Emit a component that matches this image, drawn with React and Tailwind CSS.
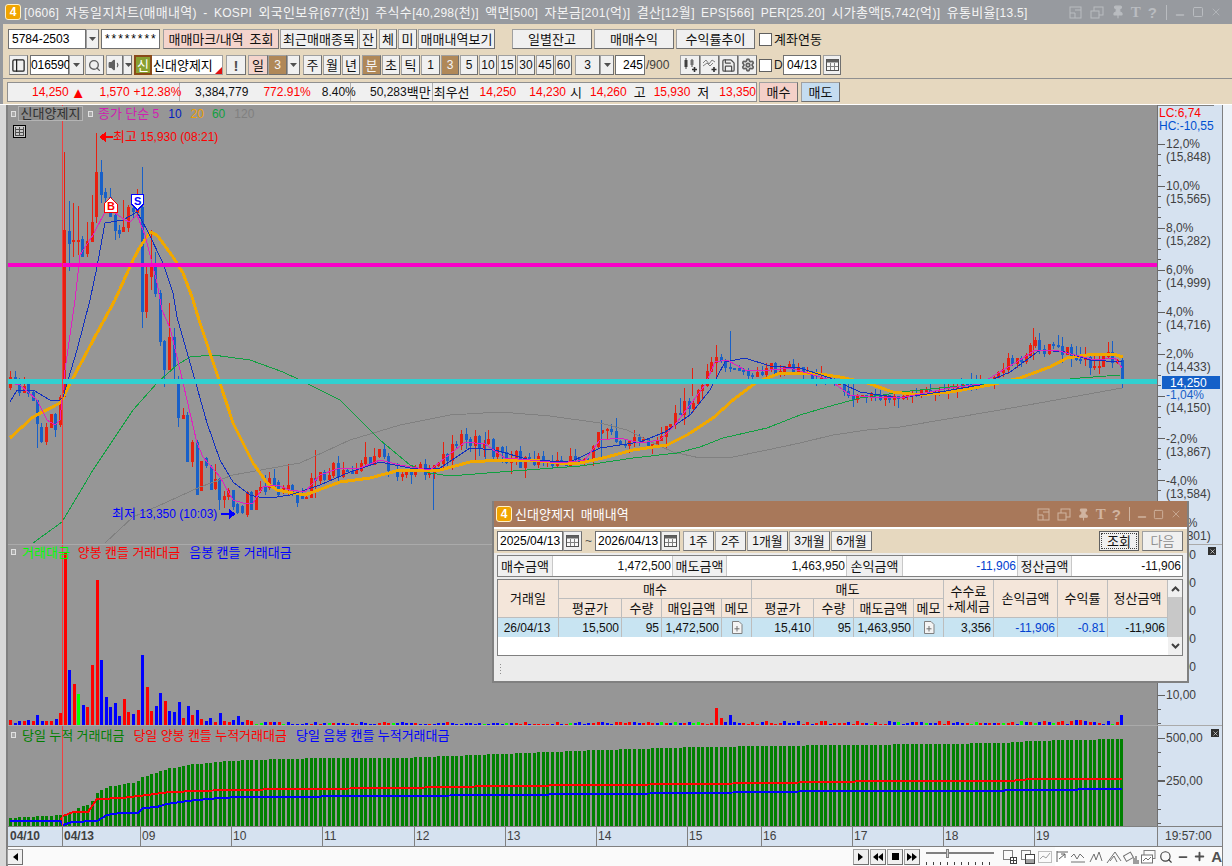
import React from "react";
import { PanelLeft, Search, Volume1, Save, Settings, Pin, Minus, Square, X, Plus } from "lucide-react";

const T = ({ s }) =>
  s.split(/([가-힣]+)/).map((p, i) =>
    /[가-힣]/.test(p) ? <span key={i} className="text-[13px]">{p}</span> : <span key={i}>{p}</span>
  );
const ST = ({ s }) =>
  s.split(/([가-힣]+)/).map((p, i) =>
    /[가-힣]/.test(p) ? <tspan key={i} fontSize="13">{p}</tspan> : <tspan key={i}>{p}</tspan>
  );

const btnBase = "flex items-center justify-center shrink-0 bg-[#f0f0f0] border border-[#a0a0a0] border-r-[#707070] border-b-[#707070] text-[#101010]";
const Btn = ({ w = "", t, c = "" }) => <div className={`${btnBase} ${w} ${c}`}>{t !== undefined && <T s={t} />}</div>;
const Arrow = ({ c = "" }) => (
  <div className={`${btnBase} ${c}`}>
    <svg width="9" height="6"><polygon points="1,1 8,1 4.5,5" fill="#505050" /></svg>
  </div>
);
const Input = ({ w, t, c = "" }) => (
  <div className={`flex items-center shrink-0 bg-white border border-[#707070] text-black ${w} ${c}`}><T s={t} /></div>
);
const Cal = () => (
  <svg width="13" height="12" viewBox="0 0 13 12">
    <rect x="0.5" y="0.5" width="12" height="11" fill="#f8f8f8" stroke="#505050" />
    <rect x="0.5" y="0.5" width="12" height="3" fill="#606060" />
    <path d="M4.5 4V11M8.5 4V11M1 7.5H12" stroke="#808080" />
  </svg>
);
const Logo = () => (
  <div className="flex items-center justify-center w-[16px] h-[16px] rounded-[3px] bg-[#f0a400] border border-[#fff0c8] text-white font-bold text-[12px] shrink-0">4</div>
);
const Memo = () => (
  <svg width="12" height="13" viewBox="0 0 12 13">
    <path d="M1.5 0.5H8L11 3.5V12.5H1.5Z" fill="#f4f4f4" stroke="#808080" />
    <path d="M6 5V10.5M3.5 7.8H8.5" stroke="#707070" />
  </svg>
);

const lerp = (pts, x) => {
  if (x <= pts[0][0]) return pts[0][1];
  for (let i = 1; i < pts.length; i++) {
    if (x <= pts[i][0]) {
      const [a, b] = pts[i - 1];
      const [c, d] = pts[i];
      return b + ((d - b) * (x - a)) / (c - a);
    }
  }
  return pts[pts.length - 1][1];
};
const line = (p) => p.map((q) => q.join(",")).join(" ");
let seed = 7;
const rnd = () => {
  seed = (seed * 16807) % 2147483647;
  return (seed & 0xffff) / 65535;
};
const CR = "#e8200f";
const CB = "#1860c8";
const base = [
  [10.5,377,388,371,390,"r"],[15,377,383,371,384,"b"],[19,383,393,378,396,"b"],[24,386,393,377,393,"r"],[28,383,394,380,397,"b"],[33,392,401,390,401,"b"],[37.5,400,424,400,448,"b"],[41.5,427,442,423,443,"b"],[46,427,442,423,445,"r"],[51.5,414,428,414,428,"r"],[55.5,414,430,413,437,"b"],[60.5,397,425,395,427,"r"],
  [64,230,397,152,397,"r"],[69.5,231,244,201,271,"b"],[73.5,240,242,203,257,"r"],[78.5,240,242,206,255,"r"],[82.5,239,257,236,257,"b"],[87.5,241,254,222,257,"r"],[92.5,222,242,195,242,"r"],[96.5,172,217,133,223,"r"],[101.5,172,195,160,203,"b"],[105.5,192,198,188,207,"b"],[110,197,217,188,217,"b"],[115,215,231,213,240,"b"],[119.5,230,234,225,238,"b"],[123.5,227,232,200,232,"r"],[128.5,207,228,205,232,"r"],[133,208,212,200,218,"b"],[137.5,210,213,189,215,"r"],[142,207,312,167,328,"b"],[146.5,274,312,263,318,"r"],[151,267,277,230,290,"r"],[155.5,267,294,252,297,"b"],[160,293,342,290,346,"b"],[164,341,370,340,387,"b"],[169.5,337,370,303,370,"r"],[174,337,367,328,380,"b"],[178.5,382,418,376,427,"b"],[183,415,419,408,419,"r"],[187.5,415,462,412,462,"b"],[192.5,442,462,440,467,"r"],[197,442,495,440,495,"b"],[201.5,461,491,461,491,"r"],[206,458,466,457,468,"b"],[211,467,490,465,490,"b"],[215.5,479,489,464,490,"r"],[219.5,479,500,478,510,"b"],[224,496,500,491,508,"r"],[228.5,490,497,488,500,"r"],[233,490,507,490,510,"b"],[237.5,504,513,503,514,"b"],[242,506,513,505,514,"b"],[247,492,515,491,517,"r"],[251,492,510,491,510,"b"],[256,490,510,490,510,"r"],[260.5,487,491,481,493,"r"],[265,487,492,475,495,"b"],[269.5,478,488,472,490,"r"],[274,478,489,469,490,"b"],[278.5,482,495,480,496,"b"],[283,487,493,485,494,"r"],[288,485,490,464,495,"r"],[292.5,485,495,484,496,"b"],[297,494,503,492,507,"b"],
];
const key = [[300,495],[315,480],[330,470],[345,472],[360,465],[380,455],[395,470],[415,465],[433,470],[450,450],[465,440],[485,440],[500,455],[520,460],[540,458],[565,462],[585,460],[600,432],[620,440],[640,442],[660,438],[680,412],[695,398],[703,388],[712,362],[720,356],[730,368],[745,372],[765,370],[785,368],[800,372],[820,378],[835,385],[850,398],[870,396],[900,398],[920,392],[945,390],[970,384],[990,380],[1005,365],[1020,358],[1033,345],[1050,350],[1070,352],[1090,362],[1110,357],[1118,360]];
const gen = [];
let prev = 495;
for (let i = 64; i < 244; i++) {
  const x = 10.5 + i * 4.555;
  const amp = x < 660 ? 17 : x < 840 ? 13 : x < 990 ? 5 : 12;
  const cl = lerp(key, x) + (rnd() - 0.5) * amp;
  const top = Math.min(prev, cl), bot = Math.max(prev, cl) + 1;
  const up = rnd() * rnd() * 16, dn = rnd() * rnd() * 12;
  gen.push([x, top, Math.max(bot, top + 2), top - up, bot + dn, cl < prev ? "r" : "b"]);
  prev = cl;
}
gen.push([1122.5,360,379,358,388,"b"]);
const extra = [[315,450,498,"r"],[433,470,510,"b"],[452,435,470,"r"],[601,420,460,"b"],[730,331,372,"b"],[716,345,378,"r"],[1033,328,360,"r"],[961,378,392,"b"],[475,430,462,"r"],[485,432,460,"b"],[692,368,396,"r"]];
const candles = [...base, ...gen];

const m5 = [[10,383],[20,385],[37,400],[47,420],[55,425],[60,420],[65,370],[75,300],[80,255],[93,235],[105,212],[115,213],[125,220],[130,222],[137,215],[145,235],[157,283],[162,310],[170,328],[177,357],[187,400],[197,443],[203,457],[220,477],[233,500],[243,503],[253,503],[263,487],[277,485],[290,490],[305,492],[320,475],[340,468],[360,468],[380,460],[400,465],[430,470],[445,458],[465,442],[485,444],[505,458],[530,460],[560,463],[585,460],[600,440],[620,438],[640,443],[660,440],[675,425],[690,405],[705,385],[715,362],[727,360],[745,370],[770,370],[790,368],[810,374],[830,380],[850,395],[870,397],[900,398],[925,393],[950,388],[980,384],[1000,372],[1020,360],[1035,350],[1055,350],[1075,355],[1095,360],[1115,358],[1122,368]];
const m10 = [[10,402],[17,390],[33,390],[50,400],[60,400],[63,397],[77,350],[90,300],[97,267],[105,223],[123,220],[137,212],[147,230],[163,263],[173,293],[177,317],[193,373],[207,423],[220,460],[233,482],[250,495],[263,498],[277,497],[290,495],[320,485],[350,472],[380,462],[410,468],[440,468],[470,448],[495,450],[530,460],[570,462],[600,448],[640,442],[665,432],[690,415],[710,390],[725,362],[745,358],[770,366],[800,368],[830,378],[860,392],[900,398],[940,392],[980,385],[1010,372],[1040,350],[1065,352],[1090,360],[1122,362]];
const m20 = [[10,438],[33,417],[60,403],[72,380],[97,333],[115,300],[133,260],[140,247],[150,232],[157,235],[173,257],[183,273],[192,297],[200,323],[220,383],[233,423],[253,463],[267,483],[277,490],[293,493],[305,495],[340,482],[370,478],[400,470],[440,470],[470,462],[500,460],[530,460],[560,463],[580,463],[607,457],[633,450],[667,445],[687,435],[713,418],[733,400],[757,382],[780,373],[813,373],[840,377],[867,383],[893,392],[920,395],[950,392],[990,385],[1020,378],[1050,367],[1067,358],[1087,355],[1113,354],[1123,357]];
const m60 = [[33,543],[62,522],[93,470],[133,410],[157,383],[177,365],[190,357],[213,355],[250,360],[283,372],[300,380],[340,400],[380,440],[410,465],[430,473],[450,476],[500,472],[580,466],[633,458],[677,453],[700,447],[723,438],[767,428],[800,415],[827,407],[860,398],[883,395],[900,392],[950,387],[1000,383],[1028,383],[1060,380],[1080,378],[1120,375]];
const m120 = [[105,543],[133,517],[167,502],[200,487],[233,475],[300,463],[350,440],[400,425],[450,415],[500,412],[550,416],[600,423],[627,430],[647,440],[673,452],[700,458],[733,457],[767,450],[800,443],[833,435],[867,430],[900,427],[1000,410],[1067,398],[1122,388]];

const vol = [[5,"r"],[2,"b"],[4,"b"],[4,"r"],[5,"b"],[4,"r"],[10,"b"],[4,"b"],[4,"r"],[4,"r"],[6,"b"],[12,"r"],[173,"r"],[55,"b"],[41,"r"],[31,"g"],[20,"b"],[18,"r"],[60,"r"],[145,"r"],[65,"b"],[28,"b"],[18,"b"],[22,"b"],[9,"b"],[26,"r"],[13,"r"],[11,"b"],[15,"r"],[70,"b"],[38,"r"],[14,"r"],[19,"b"],[32,"b"],[24,"r"],[14,"b"],[13,"b"],[23,"b"],[7,"r"],[19,"b"],[10,"r"],[15,"b"],[6,"r"],[4,"b"],[7,"b"],[3,"r"],[12,"b"],[4,"r"],[3,"r"],[5,"b"],[9,"b"],[3,"b"],[5,"r"],[4,"r"]];
const volC = { r: "#ff0000", b: "#0000ff", g: "#00ff00" };
const volAll = [];
for (let i = 0; i < 245; i++) {
  const x = 10.5 + i * 4.555;
  if (i < vol.length) { volAll.push([x, vol[i][0], vol[i][1]]); continue; }
  let h = 1 + Math.floor(rnd() * 2.6);
  if (x > 640) h += Math.floor(rnd() * 2);
  if (Math.abs(x - 716) < 2.5) h = 17;
  if (Math.abs(x - 721) < 2.5) h = 7;
  if (Math.abs(x - 730) < 2.5) h = 10;
  if (x > 1000 && rnd() < 0.4) h = 3 + Math.floor(rnd() * 3);
  if (i === 244) h = 10;
  const r = rnd();
  volAll.push([x, h, r < 0.44 ? "r" : r < 0.9 ? "b" : "g"]);
}
const env = [[10,8],[60,11],[70,13],[83,20],[90,21],[97,33],[107,39],[137,44],[143,49],[167,57],[187,61],[217,64],[247,66],[287,67],[323,68],[400,68],[500,72],[600,76],[700,79],[842,81],[939,82],[1002,83],[1032,85],[1075,86],[1115,87],[1125,87]];
const redL = [[10,822],[60,822],[63,817],[73,813],[88,813],[97,800],[123,799],[130,798],[147,796],[170,793],[227,791],[300,790],[400,789],[500,787],[600,786],[700,785],[832,783],[879,782],[1009,782],[1032,780],[1122,780]];
const blueL = [[10,822],[60,822],[63,826],[72,823],[97,822],[107,816],[120,814],[138,814],[143,809],[157,808],[167,805],[187,802],[220,799],[240,798],[320,798],[322,797],[400,797],[500,796],[600,795],[700,794],[832,792],[1004,792],[1005,791],[1077,791],[1079,790],[1122,790]];

const px = (x) => Math.round(x - 1.5);
const Square12 = ({ c = "" }) => <div className={`w-[5px] h-[6px] shrink-0 bg-[#a8a8a8] border border-[#e0e0e0] ${c}`} />;
const CloseBox = () => (
  <div className="flex items-center justify-center w-[8px] h-[8px] bg-[#303030]">
    <X size={7} color="#ffffff" strokeWidth={2} />
  </div>
);

const Ticks = ({ from, to, step, majors }) => {
  const o = [];
  for (let y = from; y <= to; y += step) {
    const major = majors.some((m) => Math.abs(m - y) < 0.6);
    o.push(<line key={y} x1="1157" x2={major ? 1164 : 1160} y1={y} y2={y} stroke="#606060" />);
  }
  return o;
};

const axisText = "#404040";
const AX = ({ y, t, f = axisText, x = 1165 }) => <text x={x} y={y + 4} fontSize="12" fill={f}>{t}</text>;

const PriceAxis = () => (
  <svg width="64" height="439" viewBox="1157 105 64 439" className="block [shape-rendering:crispEdges]">
    <Ticks from={144} to={543} step={10.5} majors={[144,186,228,270,312,354,396,438,480,522]} />
    {[["12,0%",144,"(15,848)"],["10,0%",186,"(15,565)"],["8,0%",228,"(15,282)"],["6,0%",270,"(14,999)"],["4,0%",312,"(14,716)"],["2,0%",354,"(14,433)"],["-2,0%",439,"(13,867)"],["-4,0%",481,"(13,584)"],["-6,0%",523,"(13,301)"]].map(([a,y,b]) => (
      <g key={a}><AX y={y} t={a} /><AX y={y + 12.5} t={b} /></g>
    ))}
    <AX y={395} t="-1,04%" f="#1860c8" />
    <AX y={408} t="(14,150)" />
  </svg>
);

const Dt = ({ t, c = "" }) => <span className={`text-[#101010] ${c}`}><T s={t} /></span>;

const thc = "flex items-center justify-center bg-[#f4e6da] border-r border-b border-[#bdbdbd] text-[#101010]";
const tdc = "flex items-center justify-end pr-[2px] bg-[#c8e4f2] border-r border-[#bdbdbd] text-[#101010]";

const BIcon = ({ children, c = "" }) => (
  <svg width="16" height="16" viewBox="0 0 16 16" fill="none" stroke="#707070" className={`shrink-0 ${c}`}>{children}</svg>
);

export default function App() {
  return (
    <div className="relative w-[1232px] h-[866px] overflow-hidden bg-[#96999e] text-[12px] leading-none whitespace-pre [word-spacing:2.7px] [font-family:'Liberation_Sans','Noto_Sans_CJK_KR',sans-serif]">
      {/* title */}
      <div className="flex items-center h-[24px] pl-[5px] bg-[#979a9f] text-[#f4f4f4]">
        <Logo />
        <div className="ml-[3px] [letter-spacing:0.31px]"><T s="[0606] 자동일지차트(매매내역) - KOSPI 외국인보유[677(천)] 주식수[40,298(천)] 액면[500] 자본금[201(억)] 결산[12월] EPS[566] PER[25.20] 시가총액[5,742(억)] 유통비율[13.5]" /></div>
        <div className="ml-auto mr-[10px] flex items-center text-[#b9bcc0]">
          <svg width="13" height="13" viewBox="0 0 13 13" fill="none" stroke="#b9bcc0"><rect x="1" y="1" width="11" height="11" /><path d="M1 7H6V12M6 4H12" /></svg>
          <svg width="14" height="13" viewBox="0 0 14 13" fill="none" stroke="#b9bcc0" className="ml-[8px]"><rect x="4" y="1" width="9" height="8" /><rect x="1" y="5" width="8" height="7" fill="#979a9f" /></svg>
          <Pin size={14} fill="#b9bcc0" className="ml-[7px]" />
          <span className="ml-[6px] font-bold text-[15px] [font-family:'Liberation_Serif',serif]">T</span>
          <span className="ml-[7px] font-bold text-[15px]">?</span>
          <div className="ml-[9px] w-px h-[15px] bg-[#b9bcc0]" />
          <Minus size={12} strokeWidth={3} className="ml-[7px] mt-[5px]" />
          <Square size={12} strokeWidth={2} className="ml-[6px]" />
          <X size={12} strokeWidth={1.5} className="ml-[6px]" />
        </div>
      </div>
      {/* toolbar */}
      <div className="ml-[3px] h-[55px] bg-[#e6d8bf] pl-[5px] pt-[5px] border-b border-[#909090]">
        <div className="flex h-[20px] items-stretch">
          <Input w="w-[78px]" t="5784-2503" c="pl-[3px]" />
          <Arrow c="w-[13px]" />
          <Input w="w-[59px] ml-[2px]" t="********" c="pl-[3px] tracking-[1.9px]" />
          <Btn w="w-[116px] ml-[3px] !bg-[#f4d4cc]" t="매매마크/내역 조회" />
          <Btn w="w-[78px] ml-[1px]" t="최근매매종목" />
          <Btn w="w-[18px] ml-[1px]" t="잔" />
          <Btn w="w-[18px] ml-[2px]" t="체" />
          <Btn w="w-[19px] ml-[1px]" t="미" />
          <Btn w="w-[77px] ml-[1px]" t="매매내역보기" />
          <Btn w="w-[80px] ml-[17px]" t="일별잔고" />
          <Btn w="w-[80px] ml-[2px]" t="매매수익" />
          <Btn w="w-[79px] ml-[2px]" t="수익률추이" />
          <div className="w-[13px] h-[13px] self-center ml-[4px] bg-white border border-[#606060]" />
          <div className="self-center ml-[2px] text-[#101010]"><T s="계좌연동" /></div>
        </div>
        <div className="flex h-[20px] items-stretch mt-[6px]">
          <div className={`${btnBase} w-[19px] ml-[1px]`}><PanelLeft size={15} color="#202020" /></div>
          <Input w="w-[39px] ml-[2px]" t="016590" c="pl-[0px] tracking-[-0.1px]" />
          <Arrow c="w-[15px]" />
          <div className={`${btnBase} w-[19px] ml-[1px]`}><Search size={13} color="#606060" strokeWidth={2.5} /></div>
          <div className={`${btnBase} w-[17px] ml-[2px]`}><Volume1 size={14} color="#606060" fill="#606060" /></div>
          <Arrow c="w-[9px] ml-[0px]" />
          <div className="flex items-center justify-center w-[18px] ml-[2px] shrink-0 bg-[#88a030] border-2 border-[#8a4a18] text-white"><T s="신" /></div>
          <div className="relative flex items-center w-[71px] shrink-0 bg-white border-y border-r border-[#a0a0a0] pl-[1px] text-black"><T s="신대양제지" />
            <div className="absolute right-0 bottom-0 w-0 h-0 border-l-[7px] border-l-transparent border-b-[7px] border-b-[#e01010]" />
          </div>
          <Btn w="w-[20px] ml-[3px] text-[#505050] font-bold text-[15px]" t="!" />
          <Btn w="w-[20px] ml-[2px] !bg-[#f4d4cc]" t="일" />
          <Btn w="w-[19px] !bg-[#b08858] !text-[#f4f4f4]" t="3" />
          <Arrow c="w-[13px]" />
          <Btn w="w-[19px] ml-[3px]" t="주" />
          <Btn w="w-[18px] ml-[1px]" t="월" />
          <Btn w="w-[18px] ml-[1px]" t="년" />
          <Btn w="w-[19px] ml-[2px] !bg-[#b08858] !text-[#f4f4f4]" t="분" />
          <Btn w="w-[18px] ml-[1px]" t="초" />
          <Btn w="w-[19px] ml-[1px]" t="틱" />
          <Btn w="w-[19px] ml-[1px]" t="1" />
          <Btn w="w-[18px] ml-[1px] !bg-[#b08858] !text-[#f4f4f4]" t="3" />
          <Btn w="w-[18px] ml-[1px]" t="5" />
          <Btn w="w-[18px] ml-[1px]" t="10" />
          <Btn w="w-[18px] ml-[1px]" t="15" />
          <Btn w="w-[18px] ml-[1px]" t="30" />
          <Btn w="w-[18px] ml-[1px]" t="45" />
          <Btn w="w-[17px] ml-[1px]" t="60" />
          <Btn w="w-[25px] ml-[3px]" t="3" />
          <Arrow c="w-[14px]" />
          <Input w="w-[30px] ml-[1px] justify-end pr-[1px]" t="245" />
          <div className="w-[34px] self-center ml-[1px] text-[#404040]">/900</div>
          <div className={`${btnBase} w-[20px]`}>
            <svg width="16" height="16" viewBox="0 0 16 16"><path d="M4 1V12M10 2V10" stroke="#404040" /><rect x="2.5" y="3" width="3" height="7" fill="#404040" /><rect x="8.5" y="3" width="3" height="5" fill="#707070" /><path d="M12.5 10V15M10 12.5H15" stroke="#303030" strokeWidth="1.6" /></svg>
          </div>
          <div className={`${btnBase} w-[19px]`}>
            <svg width="16" height="16" viewBox="0 0 16 16" fill="none"><path d="M1 6L4 3L7 7L10 3L13 5M1 9L5 6L8 9L11 6" stroke="#808080" /><path d="M12 10V15M9.5 12.5H14.5" stroke="#303030" strokeWidth="1.6" /></svg>
          </div>
          <div className={`${btnBase} w-[19px]`}><Save size={15} color="#505050" /></div>
          <div className={`${btnBase} w-[19px]`}><Settings size={14} color="#606060" strokeWidth={3} /></div>
          <div className="w-[13px] h-[13px] self-center ml-[2px] bg-white border border-[#606060]" />
          <div className="w-[9px] self-center ml-[2px] text-[#202020]">D</div>
          <Input w="w-[38px]" t="04/13" c="justify-center" />
          <div className={`${btnBase} w-[18px] ml-[2px]`}><Cal /></div>
        </div>
      </div>
      {/* info row */}
      <div className="ml-[3px] h-[25px] bg-[#e6d8bf] pl-[4px] pt-[3px]">
        <div className="flex h-[20px] items-stretch text-[#ff0000]">
          <div className="flex items-stretch w-[750px] bg-[#f0f0f0] border border-[#909090]">
            <div className="flex items-center w-[172px] border-r border-[#b0b0b0] pl-[24px]">
              <span>14,250</span><span className="ml-[2px] text-[15px]">▲</span><span className="ml-[14px]">1,570</span><span className="ml-[4px]">+12.38%</span>
            </div>
            <div className="flex items-center w-[171px] border-r border-[#b0b0b0] pl-[15px]">
              <span className="text-[#101010]">3,384,779</span><span className="ml-[15px]">772.91%</span><span className="ml-[11px] text-[#101010]">8.40%</span>
            </div>
            <div className="flex items-center w-[83px] border-r border-[#b0b0b0] pl-[19px] text-[#101010]"><T s="50,283백만" /></div>
            <div className="flex items-center pl-[1px]">
              <Dt t="최우선" /><span className="ml-[10px]">14,250</span><span className="ml-[13px]">14,230</span>
              <Dt t="시" c="ml-[4px]" /><span className="ml-[8px]">14,260</span>
              <Dt t="고" c="ml-[7px]" /><span className="ml-[8px]">15,930</span>
              <Dt t="저" c="ml-[7px]" /><span className="ml-[10px]">13,350</span>
            </div>
          </div>
          <Btn w="w-[39px] ml-[2px] !bg-[#f4d0c8]" t="매수" />
          <Btn w="w-[39px] ml-[3px] !bg-[#c4dcf0]" t="매도" />
        </div>
      </div>
      {/* chart body */}
      <div className="flex h-[762px] border-t border-white">
        <div className="w-[8px] bg-[#d8d8d8] border-r-2 border-[#808080] shrink-0" />
        <div className="flex flex-col w-[1214px] shrink-0">
          {/* price pane */}
          <div className="flex h-[440px] border-b border-[#aaaaaa]">
            <div className="relative w-[1149px] bg-[#969696]">
              <svg width="1149" height="439" viewBox="8 105 1149 439" className="block [shape-rendering:crispEdges]">
                {candles.map(([x, t, b, h, l, c], i) => (
                  <g key={i}>
                    <line x1={px(x) + 1.5} x2={px(x) + 1.5} y1={h} y2={l} stroke={c === "r" ? CR : CB} strokeWidth="1" />
                    <rect x={px(x)} y={t} width="3" height={b - t} fill={c === "r" ? CR : CB} />
                  </g>
                ))}
                {extra.map(([x, a, b, c], i) => <line key={i} x1={x + 0.5} x2={x + 0.5} y1={a} y2={b} stroke={c === "r" ? CR : CB} />)}
                <polyline points={line(m120)} fill="none" stroke="#808080" strokeWidth="1" />
                <polyline points={line(m60)} fill="none" stroke="#10a040" strokeWidth="1" />
                <polyline points={line(m20)} fill="none" stroke="#f0a800" strokeWidth="3" />
                <polyline points={line(m10)} fill="none" stroke="#1030c0" strokeWidth="1" />
                <polyline points={line(m5)} fill="none" stroke="#e020c0" strokeWidth="1" />
                <rect x="8" y="263" width="1149" height="4" fill="#fa00c8" />
                <rect x="8" y="379" width="1149" height="5" fill="#30d0d0" />
                <line x1="62.5" x2="62.5" y1="105" y2="544" stroke="#f04040" />
                <polygon points="110.5,197.5 117,204 117,212.5 104,212.5 104,204" fill="#fff" stroke="#ff0000" />
                <text x="107" y="210" fontSize="11" fontWeight="bold" fill="#ff0000">B</text>
                <polygon points="131.5,194.5 143.5,194.5 143.5,204 137.5,210 131.5,204" fill="#fff" stroke="#0000ff" />
                <text x="134" y="205" fontSize="11" fontWeight="bold" fill="#0000ff">S</text>
                <path d="M99 137L106 132V136H113V138H106V142Z" fill="#ff0000" />
                <text x="113" y="141" fontSize="12" fill="#ff0000" className="[word-spacing:0]"><ST s="최고 15,930 (08:21)" /></text>
                <text x="112" y="518" fontSize="12" fill="#0000ff" className="[word-spacing:0]"><ST s="최저 13,350 (10:03)" /></text>
                <path d="M221 513H229V509L236 514L229 519V515H221Z" fill="#0000ff" />
              </svg>
              <div className="absolute left-0 top-[1px] flex items-center h-[15px] [word-spacing:0]">
                <Square12 c="ml-[3px]" />
                <div className="flex items-center ml-[2px] h-[15px] w-[65px] justify-center border border-[#b4b4b4] bg-[#8c8c8c] text-[#303030]"><T s="신대양제지" /></div>
                <Square12 c="ml-[5px]" />
                <span className="ml-[5px] text-[#d020b0]"><T s="종가 단순 5" /></span>
                <span className="ml-[9px] text-[#0020c0]">10</span>
                <span className="ml-[9px] text-[#f0a000]">20</span>
                <span className="ml-[8px] text-[#10a040]">60</span>
                <span className="ml-[9px] text-[#808080]">120</span>
              </div>
              <div className="absolute left-[5px] top-[20px] w-[13px] h-[13px] bg-[#c8c8c8] border border-black flex items-center justify-center">
                <svg width="9" height="9"><path d="M0.5 0V9M4.5 0V9M8.5 0V9M0 2.5H9M0 5.5H9M0 8.5H9" stroke="#505050" /></svg>
              </div>
            </div>
            <div className="relative w-[65px] bg-[#d6e2f0] border-l border-[#707070]">
              <PriceAxis />
              <div className="absolute left-0 top-0 w-[56px] h-[26px] bg-[#d6e2f0] border-t border-[#808080] pl-[1px] pt-[1px]">
                <div className="text-[#ff0000] h-[12px]">LC:6,74</div>
                <div className="text-[#0050d0] h-[12px] mt-[1px]">HC:-10,55</div>
              </div>
              <div className="absolute left-[4px] top-[271px] w-[58px] h-[13px] bg-[#1460c8] text-white flex items-center pl-[8px]">14,250</div>
            </div>
          </div>
          {/* volume pane */}
          <div className="flex h-[181px] border-b border-[#aaaaaa]">
            <div className="relative w-[1149px] bg-[#969696]">
              <svg width="1149" height="180" viewBox="8 545 1149 180" className="block [shape-rendering:crispEdges]">
                {volAll.map(([x, h, c], i) => <rect key={i} x={px(x)} y={725 - h} width="3" height={h} fill={volC[c]} />)}
                <line x1="62.5" x2="62.5" y1="545" y2="726" stroke="#f04040" />
              </svg>
              <div className="absolute left-[3px] top-0 flex items-center h-[14px] [word-spacing:0]">
                <Square12 />
                <span className="ml-[6px] text-[#00ff00]"><T s="거래대금" /></span>
                <span className="ml-[8px] text-[#ff0000]"><T s="양봉 캔들 거래대금" /></span>
                <span className="ml-[9px] text-[#0000ff]"><T s="음봉 캔들 거래대금" /></span>
              </div>
            </div>
            <div className="relative w-[65px] bg-[#d6e2f0] border-l border-[#707070]">
              <svg width="64" height="180" viewBox="1157 545 64 180" className="block [shape-rendering:crispEdges]">
                <Ticks from={555} to={723} step={14} majors={[555,583,611,639,667,695]} />
                {[["60,00",555],["50,00",583],["40,00",611],["30,00",639],["20,00",667],["10,00",695]].map(([t, y]) => <AX key={t} y={y} t={t} />)}
              </svg>
              <div className="absolute right-[6px] top-[2px]"><CloseBox /></div>
            </div>
          </div>
          {/* cumulative pane */}
          <div className="flex h-[100px]">
            <div className="relative w-[1149px] bg-[#969696]">
              <svg width="1149" height="100" viewBox="8 727 1149 100" className="block [shape-rendering:crispEdges]">
                {volAll.map(([x], i) => {
                  const h = Math.round(lerp(env, x));
                  return <rect key={i} x={px(x)} y={827 - h} width="3" height={h} fill="#008000" />;
                })}
                <polyline points={line(redL)} fill="none" stroke="#ff0000" strokeWidth="2" />
                <polyline points={line(blueL)} fill="none" stroke="#0000ff" strokeWidth="2" />
                <line x1="62.5" x2="62.5" y1="727" y2="827" stroke="#f04040" />
              </svg>
              <div className="absolute left-[3px] top-[2px] flex items-center h-[14px] [word-spacing:0]">
                <Square12 />
                <span className="ml-[6px] text-[#008000]"><T s="당일 누적 거래대금" /></span>
                <span className="ml-[9px] text-[#ff0000]"><T s="당일 양봉 캔들 누적거래대금" /></span>
                <span className="ml-[9px] text-[#0000ff]"><T s="당일 음봉 캔들 누적거래대금" /></span>
              </div>
            </div>
            <div className="relative w-[65px] bg-[#d6e2f0] border-l border-[#707070]">
              <svg width="64" height="100" viewBox="1157 727 64 100" className="block [shape-rendering:crispEdges]">
                <Ticks from={739} to={826} step={14.3} majors={[739,782]} />
                <line x1="1157" x2="1164" y1="782" y2="782" stroke="#606060" />
                <AX y={739} t="500,00" />
                <AX y={782} t="250,00" />
              </svg>
              <div className="absolute right-[3px] top-[3px]"><CloseBox /></div>
            </div>
          </div>
          {/* time axis */}
          <div className="h-[21px] bg-[#d6e2f0] border-y border-[#808080]">
            <svg width="1214" height="19" viewBox="8 827 1214 19" className="block [shape-rendering:crispEdges]">
              {[62.5,140.5,231.5,322.5,414.5,505.5,596.5,687.5,761.5,852.5,943.5,1034.5,1157.5].map((x) => <line key={x} x1={x} x2={x} y1="827" y2="846" stroke="#808080" />)}
              <text x="10" y="840" fontSize="12" fontWeight="bold" fill="#404040">04/10</text>
              <text x="64" y="840" fontSize="12" fontWeight="bold" fill="#404040">04/13</text>
              {[["09",142],["10",233],["11",324],["12",416],["13",507],["14",598],["15",689],["16",763],["17",854],["18",945],["19",1036]].map(([t, x]) => <text key={t} x={x} y="840" fontSize="12" fill="#404040">{t}</text>)}
              <text x="1165" y="840" fontSize="12" fill="#404040">19:57:00</text>
            </svg>
          </div>
          {/* bottom bar */}
          <div className="flex items-center flex-1 bg-[#fafafa]">
            <div className={`${btnBase} w-[16px] h-[16px] -ml-[1px]`}><svg width="6" height="8"><polygon points="6,0 6,8 1,4" fill="#000" /></svg></div>
            <div className="ml-[830px] flex items-center">
              <div className={`${btnBase} w-[16px] h-[16px]`}><svg width="6" height="8"><polygon points="0,0 0,8 5,4" fill="#000" /></svg></div>
              <div className={`${btnBase} w-[16px] h-[16px] ml-[1px]`}><svg width="10" height="8"><polygon points="5,0 5,8 0,4" fill="#000" /><polygon points="10,0 10,8 5,4" fill="#000" /></svg></div>
              <div className={`${btnBase} w-[16px] h-[16px] ml-[1px]`}><div className="w-[7px] h-[7px] bg-black" /></div>
              <div className={`${btnBase} w-[16px] h-[16px] ml-[1px]`}><svg width="10" height="8"><polygon points="0,0 0,8 5,4" fill="#000" /><polygon points="5,0 5,8 10,4" fill="#000" /></svg></div>
            </div>
            <div className="relative ml-[6px] w-[70px] h-[16px]">
              <div className="absolute left-0 right-0 top-[3px] h-[2px] bg-[#808080]" />
              <div className="absolute left-[20px] top-0 w-[3px] h-[9px] bg-[#d0d0d0] border border-[#808080]" />
              <div className="absolute left-0 right-0 bottom-0 h-[3px] [background-image:repeating-linear-gradient(90deg,#404040_0,#404040_1px,transparent_1px,transparent_7px)]" />
            </div>
            <div className="flex items-center ml-[8px]">
              <BIcon c="mr-[2px]"><rect x="1.5" y="1.5" width="9" height="9" stroke="#808080" /><rect x="8.5" y="8.5" width="6" height="6" fill="#fff" stroke="#404040" /><path d="M11.5 8.5V14.5M8.5 11.5H14.5" stroke="#404040" /></BIcon>
              <BIcon c="mr-[1px]"><rect x="1.5" y="1.5" width="9" height="9" stroke="#808080" /><rect x="5.5" y="5.5" width="9" height="9" fill="#fff" stroke="#404040" /><rect x="6" y="10" width="8" height="4" fill="#a0a0a0" stroke="none" /></BIcon>
              <BIcon c="mr-[1px]"><rect x="1.5" y="2.5" width="13" height="11" strokeDasharray="1 1" stroke="#808080" /><path d="M3 10L6 7L9 9L13 4" stroke="#a0a0a0" /></BIcon>
              <div className="flex items-center justify-center w-[15px] h-[19px] bg-white ml-[1px]">
                <svg width="13" height="13" viewBox="0 0 13 13" fill="none" stroke="#606060"><path d="M1 1V12M1 2H12M3 9L9 4M5 4H9V8" /></svg>
              </div>
              <BIcon><path d="M1 8L4 5L7 10L10 5L14 9M1 13H15" /></BIcon>
              <BIcon c="ml-[3px]"><path d="M1 13L5 5L7 11L10 3L13 12" /></BIcon>
              <BIcon c="ml-[1px]"><path d="M1 14L9 3L15 12M4 12L8 7L11 13" /></BIcon>
              <BIcon c="ml-[1px]"><rect x="1.5" y="5" width="8" height="6" transform="rotate(-30 5 8)" /><path d="M11 9V15M13 7V15M15 11V15" stroke="#404040" /></BIcon>
              <BIcon c="ml-[1px]"><rect x="4" y="1.5" width="11" height="8" stroke="#808080" /><rect x="1.5" y="6" width="11" height="8" fill="#fff" /><path d="M3 12L6 9L8 11L11 8" /></BIcon>
              <Search size={14} color="#404040" strokeWidth={2} className="ml-[3px]" />
              <Minus size={12} color="#505050" strokeWidth={3.5} className="ml-[4px]" />
              <Plus size={13} color="#505050" strokeWidth={3.5} className="ml-[4px]" />
              <span className="ml-[5px] text-[15px] font-bold text-[#505050]">A</span>
            </div>
          </div>
        </div>
        <div className="flex-1 bg-[#eef3f8] border-l border-[#808080]" />
      </div>
      {/* dialog */}
      <div className="absolute left-[492px] top-[501px] w-[697px] h-[182px] bg-[#e0e0e0] border-r-2 border-b-2 border-l-2 border-[#808080] flex flex-col">
        <div className="flex items-center h-[26px] shrink-0 bg-[#a8785a] text-white pl-[2px]">
          <Logo />
          <span className="ml-[3px]"><T s="신대양제지 매매내역" /></span>
          <div className="ml-auto mr-[5px] flex items-center text-[#d0b4a0]">
            <svg width="13" height="13" viewBox="0 0 13 13" fill="none" stroke="#d0b4a0"><rect x="1" y="1" width="11" height="11" /><path d="M1 7H6V12M6 4H12" /></svg>
            <svg width="14" height="13" viewBox="0 0 14 13" fill="none" stroke="#d0b4a0" className="ml-[7px]"><rect x="4" y="1" width="9" height="8" /><rect x="1" y="5" width="8" height="7" fill="#a8785a" /></svg>
            <Pin size={13} fill="#d0b4a0" className="ml-[6px]" />
            <span className="ml-[6px] font-bold text-[15px] [font-family:'Liberation_Serif',serif]">T</span>
            <span className="ml-[6px] font-bold text-[15px]">?</span>
            <div className="ml-[8px] w-px h-[14px] bg-[#d0b4a0]" />
            <Minus size={12} strokeWidth={3} className="ml-[6px] mt-[5px]" />
            <Square size={11} strokeWidth={2} className="ml-[5px]" />
            <X size={12} strokeWidth={1.5} className="ml-[6px]" />
          </div>
        </div>
        <div className="h-[2px] bg-white shrink-0" />
        <div className="flex items-center h-[24px] shrink-0 bg-[#e6d8bf] pl-[3px] text-[#101010]">
          <Input w="w-[66px] h-[20px]" t="2025/04/13" c="pl-[2px] border-[#505050]" />
          <div className={`${btnBase} w-[19px] h-[20px]`}><Cal /></div>
          <span className="w-[13px] text-center text-[#505050]">~</span>
          <Input w="w-[66px] h-[20px]" t="2026/04/13" c="pl-[2px] border-[#505050]" />
          <div className={`${btnBase} w-[19px] h-[20px]`}><Cal /></div>
          <Btn w="w-[31px] h-[20px] ml-[3px]" t="1주" />
          <Btn w="w-[31px] h-[20px] ml-[1px]" t="2주" />
          <Btn w="w-[41px] h-[20px] ml-[1px]" t="1개월" />
          <Btn w="w-[41px] h-[20px] ml-[1px]" t="3개월" />
          <Btn w="w-[41px] h-[20px] ml-[1px]" t="6개월" />
          <div className={`${btnBase} w-[40px] h-[20px] ml-[227px] !border-[#606060] outline outline-1 -outline-offset-3 outline-dotted outline-[#404040]`}><T s="조회" /></div>
          <div className={`${btnBase} w-[41px] h-[20px] ml-[3px] !text-[#909090]`}><T s="다음" /></div>
        </div>
        <div className="flex-1 bg-[#ececec] px-[3px] pt-[2px] flex flex-col">
          <div className="flex h-[22px] w-[686px] shrink-0 bg-white border border-[#808080] text-[#101010]">
            <div className="w-[55px] flex items-center justify-center bg-[#f0f0f0] border-r border-[#c8c8c8]"><T s="매수금액" /></div>
            <div className="w-[119px] flex items-center justify-end pr-[1px]">1,472,500</div>
            <div className="w-[55px] flex items-center justify-center bg-[#f0f0f0] border-x border-[#c8c8c8]"><T s="매도금액" /></div>
            <div className="w-[119px] flex items-center justify-end pr-[1px]">1,463,950</div>
            <div className="w-[57px] flex items-center justify-center bg-[#f0f0f0] border-x border-[#c8c8c8]"><T s="손익금액" /></div>
            <div className="w-[114px] flex items-center justify-end pr-[1px] text-[#0040d0]">-11,906</div>
            <div className="w-[55px] flex items-center justify-center bg-[#f0f0f0] border-x border-[#c8c8c8]"><T s="정산금액" /></div>
            <div className="flex-1 flex items-center justify-end pr-[1px]">-11,906</div>
          </div>
          <div className="flex h-[77px] w-[686px] shrink-0 mt-[2px] bg-white border border-[#808080]">
            <div className="w-[670px] grid grid-cols-[61px_63px_40px_60px_30px_62px_40px_60px_30px_50px_64px_50px_60px] grid-rows-[19px_19px_19px_19px]">
              <div className={`${thc} row-span-2`}><T s="거래일" /></div>
              <div className={`${thc} col-span-4`}><T s="매수" /></div>
              <div className={`${thc} col-span-4`}><T s="매도" /></div>
              <div className={`${thc} row-span-2 flex-col gap-[2px]`}><div><T s="수수료" /></div><div><T s="+제세금" /></div></div>
              <div className={`${thc} row-span-2`}><T s="손익금액" /></div>
              <div className={`${thc} row-span-2`}><T s="수익률" /></div>
              <div className={`${thc} row-span-2`}><T s="정산금액" /></div>
              {["평균가","수량","매입금액","메모","평균가","수량","매도금액","메모"].map((t, i) => <div key={i} className={thc}><T s={t} /></div>)}
              <div className={`${tdc} !justify-center`}>26/04/13</div>
              <div className={tdc}>15,500</div>
              <div className={tdc}>95</div>
              <div className={tdc}>1,472,500</div>
              <div className={`${tdc} !justify-center !pr-0`}><Memo /></div>
              <div className={tdc}>15,410</div>
              <div className={tdc}>95</div>
              <div className={tdc}>1,463,950</div>
              <div className={`${tdc} !justify-center !pr-0`}><Memo /></div>
              <div className={tdc}>3,356</div>
              <div className={`${tdc} !text-[#0040d0]`}>-11,906</div>
              <div className={`${tdc} !text-[#0040d0]`}>-0.81</div>
              <div className={tdc}>-11,906</div>
            </div>
            <div className="flex-1 flex flex-col bg-[#f0f0f0]">
              <div className="h-[17px] flex items-center justify-center"><svg width="9" height="6" fill="none"><path d="M1 5L4.5 1.5L8 5" stroke="#404040" strokeWidth="2" /></svg></div>
              <div className="h-[40px] bg-[#c8c8c8]" />
              <div className="flex-1 flex items-center justify-center"><svg width="9" height="6" fill="none"><path d="M1 1L4.5 4.5L8 1" stroke="#404040" strokeWidth="2" /></svg></div>
            </div>
          </div>
          <div className="flex-1 flex items-center pl-[2px]">
            <div className="w-[3px] h-[12px] [background-image:radial-gradient(#909090_1px,transparent_1px)] [background-size:3px_3px]" />
          </div>
        </div>
      </div>
    </div>
  );
}
